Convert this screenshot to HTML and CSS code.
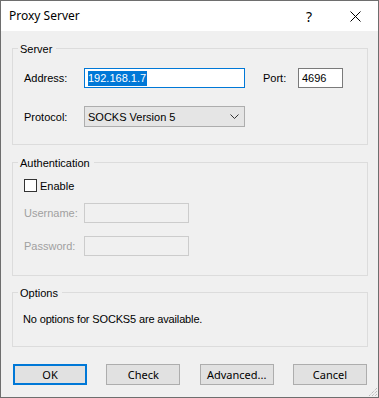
FILE: index.html
```html
<!DOCTYPE html>
<html>
<head>
    <meta charset="UTF-8">
    <title>Proxy Server</title>
    <link rel="stylesheet" href="styles.css">
</head>
<body>
    <div class="window">
        <div class="titlebar">
            <span class="title">Proxy Server</span>
            <span class="tbtn help">?</span>
            <span class="tbtn close">
                <svg width="11" height="11" viewBox="0 0 11 11"><path d="M0.5 0.5 L10.5 10.5 M10.5 0.5 L0.5 10.5" stroke="#000" stroke-width="1" fill="none"/></svg>
            </span>
        </div>

        <div class="content">
            <fieldset class="group">
                <legend>Server</legend>
                <div class="body server">
                    <div class="row">
                        <span class="lbl">Address:</span>
                        <div class="edit focused address"><span class="sel">192.168.1.7</span></div>
                        <span class="lbl port-lbl">Port:</span>
                        <div class="edit port">4696</div>
                    </div>
                    <div class="row proto">
                        <span class="lbl">Protocol:</span>
                        <div class="combo">
                            <span>SOCKS Version 5</span>
                            <svg width="9" height="5" viewBox="0 0 9 5"><polyline points="0.5,0.5 4.5,4.5 8.5,0.5" stroke="#333" stroke-width="1" fill="none"/></svg>
                        </div>
                    </div>
                </div>
            </fieldset>

            <fieldset class="group">
                <legend>Authentication</legend>
                <div class="body auth">
                    <div class="check-row">
                        <span class="checkbox"></span>
                        <span>Enable</span>
                    </div>
                    <div class="row user">
                        <span class="lbl disabled">Username:</span>
                        <div class="edit off"></div>
                    </div>
                    <div class="row pass">
                        <span class="lbl disabled">Password:</span>
                        <div class="edit off"></div>
                    </div>
                </div>
            </fieldset>

            <fieldset class="group options">
                <legend>Options</legend>
                <div class="body opts">
                    No options for SOCKS5 are available.
                </div>
            </fieldset>

            <div class="buttons">
                <button class="default">OK</button>
                <button>Check</button>
                <button>Advanced...</button>
                <button>Cancel</button>
            </div>
        </div>

        <svg class="grip" width="12" height="12" viewBox="0 0 12 12">
            <path d="M11 3 L3 11 M11 6 L6 11 M11 9 L9 11" stroke="#a8a8a8" stroke-width="1" stroke-dasharray="1 1" fill="none"/>
        </svg>
    </div>
</body>
</html>
```

FILE: styles.css
```css
* { box-sizing: border-box; }
body { margin: 0; font-family: "Liberation Sans", Arial, sans-serif; font-size: 11px; color: #000; background: #f0f0f0; }

.window { position: relative; width: 379px; height: 398px; border: 1px solid #6e6e6e; background: #f0f0f0; }

.titlebar { height: 30px; background: #fff; display: flex; align-items: center; padding-left: 8px; }
.title { font-family: "Noto Sans", sans-serif; font-size: 12px; line-height: 16px; margin-right: auto; }
.tbtn { width: 46px; height: 30px; display: flex; align-items: center; justify-content: center; }
.help { font-family: "Noto Sans", sans-serif; font-size: 14px; padding-top: 1px; }

.content { padding: 10px 10px 0 11px; }

.group { margin: 0 0 10px; padding: 0; border: 1px solid #dcdcdc; }
.group legend { margin-left: 5px; padding: 2px 4px 0 2px; line-height: 12px; }
.options { margin-bottom: 0; margin-top: -1px; }

.body { padding-left: 11px; }
.server { padding-top: 13px; padding-bottom: 17px; }
.auth { padding-top: 10px; padding-bottom: 19px; }
.opts { padding: 13px 0 20px 10px; line-height: 14px; letter-spacing: -0.15px; }

.row { display: flex; align-items: center; }
.lbl { width: 60px; line-height: 14px; }
.port-lbl { width: 35px; margin-left: 18px; }
.proto { margin-top: 18px; }
.user { margin-top: 11px; }
.pass { margin-top: 13px; }
.disabled { color: #a0a0a0; }

.edit { height: 20px; background: #fff; border: 1px solid #7a7a7a; display: flex; align-items: center; padding: 0 3px; }
.address { width: 161px; }
.port { width: 45px; }
.focused { border-color: #0078d7; }
.sel { background: #0078d7; color: #fff; line-height: 15px; padding-right: 1px; }
.off { width: 105px; background: #f0f0f0; border-color: #cccccc; }

.combo { width: 161px; height: 21px; background: #e5e5e5; border: 1px solid #adadad; display: flex; align-items: center; justify-content: space-between; padding: 0 5px 0 3px; }

.check-row { display: flex; align-items: center; height: 13px; }
.checkbox { width: 13px; height: 13px; border: 1px solid #333; background: #fff; margin-right: 3px; }

.buttons { display: flex; justify-content: space-between; margin-top: 17px; padding: 0 1px; }
button { width: 74px; height: 21px; margin: 0; padding: 0; font-family: "Noto Sans", sans-serif; font-size: 11px; color: #000; background: #e1e1e1; border: 1px solid #adadad; border-radius: 0; }
button.default { border: 2px solid #0078d7; }

.grip { position: absolute; right: 0; bottom: 0; }
```
